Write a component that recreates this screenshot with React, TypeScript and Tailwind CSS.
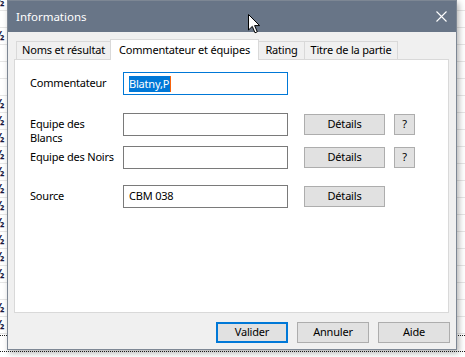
import React from 'react';

const FONT = { fontFamily: '"Noto Sans", "Open Sans", sans-serif' };

// rows of the grid behind the dialog; true = a "½" cell peeks out on the left
const BG_ROWS = [true, false, true, false, false, false, true, true, true, true, true, true, true, true, true, true, true, false, true, true];

function Cursor() {
  return (
    <svg width="13" height="20" viewBox="0 0 13 20" className="absolute left-[248px] top-[14px] z-30">
      <path d="M0.5 0.5 L0.5 16 L4.3 12.4 L7 18.8 L9.3 17.8 L6.6 11.6 L11.6 11.6 Z" fill="#fff" stroke="#000" strokeWidth="1" />
    </svg>
  );
}

function Tab({ label, width, active }: { label: string; width: number; active?: boolean }) {
  if (active) {
    return (
      <div
        className="h-[21px] -mb-px bg-white border border-b-0 border-[#d9d9d9] flex items-start justify-center pt-[2px] whitespace-nowrap relative z-10"
        style={{ width }}
      >
        {label}
      </div>
    );
  }
  return (
    <div
      className="h-[18px] bg-[#f0f0f0] border border-b-0 border-[#d9d9d9] flex items-center justify-center whitespace-nowrap"
      style={{ width }}
    >
      {label}
    </div>
  );
}

function WinButton({ label, width, primary }: { label: string; width: number; primary?: boolean }) {
  return (
    <div
      className={
        primary
          ? 'h-[21px] bg-[#e1e1e1] border-2 border-[#0078d7] flex items-center justify-center'
          : 'h-[21px] bg-[#e1e1e1] border border-[#adadad] flex items-center justify-center'
      }
      style={{ width }}
    >
      {label}
    </div>
  );
}

function Field({ value, focused }: { value?: string; focused?: boolean }) {
  return (
    <div
      className={
        focused
          ? 'w-[165px] h-[23px] border border-[#0078d7] bg-white flex items-center pl-[5px]'
          : 'w-[165px] h-[23px] border border-[#7a7a7a] bg-white flex items-center pl-[5px]'
      }
    >
      {focused ? (
        <span className="flex items-center">
          <span className="bg-[#0078d7] text-white leading-[16px] pr-[1px]">{value}</span>
          <span className="w-px h-[16px] bg-[#f7630c]" />
        </span>
      ) : (
        value
      )}
    </div>
  );
}

export default function App() {
  return (
    <div className="relative w-[465px] h-[357px] overflow-hidden bg-white" style={FONT}>
      {/* window behind */}
      <div className="flex flex-col -mt-[6px]">
        {BG_ROWS.map((half, i) => (
          <div key={i} className="h-[17px] border-b border-[#e6e6e6] flex items-center overflow-hidden">
            {half && <span className="-ml-[6px] text-[12px] font-bold text-[#1a1a40] leading-[14px]">½</span>}
          </div>
        ))}
        <div className="h-[2px] border-b border-dotted border-[#222]" />
        <div className="h-[16px] border-b border-dotted border-[#222]" />
      </div>

      <Cursor />

      {/* dialog */}
      <div className="absolute left-[7px] top-0 w-[450px] h-[350px] border border-[#7d8794] bg-[#f0f0f0] flex flex-col shadow-[2px_3px_6px_rgba(0,0,0,0.3)] z-20 text-[11px] tracking-[-0.2px] text-black">
        <div className="h-[31px] bg-[#687587] flex items-center justify-between pl-[8px] pr-[9px] text-white text-[11.5px] tracking-normal shrink-0">
          <span>Informations</span>
          <svg width="11" height="11" viewBox="0 0 11 11">
            <path d="M0.5 0.5 L10.5 10.5 M10.5 0.5 L0.5 10.5" stroke="#fff" strokeWidth="1.1" />
          </svg>
        </div>

        <div className="flex flex-col pl-[6px] pt-[7px]">
          <div className="flex items-end ml-[2px]">
            <Tab label="Noms et résultat" width={95} />
            <div className="-ml-px">
              <Tab label="Commentateur et équipes" width={149} active />
            </div>
            <div className="-ml-px">
              <Tab label="Rating" width={47} />
            </div>
            <div className="-ml-px">
              <Tab label="Titre de la partie" width={94} />
            </div>
          </div>

          <div className="w-[435px] h-[254px] bg-white border border-[#d9d9d9] flex flex-col pl-[15px]">
            <div className="flex items-center h-[23px] mt-[12px]">
              <div className="w-[93px]">Commentateur</div>
              <Field value="Blatny,P" focused />
            </div>

            <div className="flex items-center h-[23px] mt-[18px]">
              <div className="w-[93px] self-start mt-[4px] leading-[14px] flex flex-col">
                <span>Equipe des</span>
                <span>Blancs</span>
              </div>
              <Field />
              <div className="ml-[16px]">
                <WinButton label="Détails" width={81} />
              </div>
              <div className="ml-[9px]">
                <WinButton label="?" width={21} />
              </div>
            </div>

            <div className="flex items-center h-[23px] mt-[10px]">
              <div className="w-[93px] whitespace-nowrap">Equipe des Noirs</div>
              <Field />
              <div className="ml-[16px]">
                <WinButton label="Détails" width={81} />
              </div>
              <div className="ml-[9px]">
                <WinButton label="?" width={21} />
              </div>
            </div>

            <div className="flex items-center h-[23px] mt-[16px]">
              <div className="w-[93px]">Source</div>
              <Field value="CBM 038" />
              <div className="ml-[16px]">
                <WinButton label="Détails" width={81} />
              </div>
            </div>
          </div>

          <div className="flex justify-end gap-[9px] mt-[9px] pr-[6px]">
            <WinButton label="Valider" width={72} primary />
            <WinButton label="Annuler" width={72} />
            <WinButton label="Aide" width={72} />
          </div>
        </div>
      </div>
    </div>
  );
}
